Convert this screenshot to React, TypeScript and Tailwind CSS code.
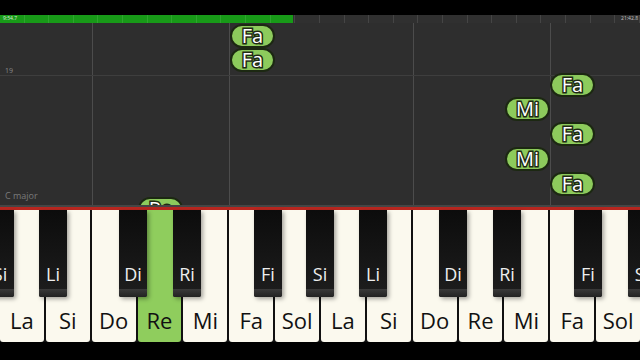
import React from 'react';

// Piano-roll lesson view: note bubbles falling onto a solfege keyboard

type Note = { label: string; left: string; top: string };

const notes: Note[] = [
  { label: 'Fa', left: 'left-[230px]', top: 'top-[1px]' },
  { label: 'Fa', left: 'left-[230px]', top: 'top-[25px]' },
  { label: 'Fa', left: 'left-[550px]', top: 'top-[50px]' },
  { label: 'Mi', left: 'left-[505px]', top: 'top-[74px]' },
  { label: 'Fa', left: 'left-[550px]', top: 'top-[99px]' },
  { label: 'Mi', left: 'left-[505px]', top: 'top-[124px]' },
  { label: 'Fa', left: 'left-[550px]', top: 'top-[149px]' },
  { label: 'Re', left: 'left-[138px]', top: 'top-[174px]' },
];

const whiteKeys = ['La', 'Si', 'Do', 'Re', 'Mi', 'Fa', 'Sol', 'La', 'Si', 'Do', 'Re', 'Mi', 'Fa', 'Sol'];

const blackKeys: { label: string; left: string }[] = [
  { label: 'Si', left: 'left-[-14px]' },
  { label: 'Li', left: 'left-[39px]' },
  { label: 'Di', left: 'left-[119px]' },
  { label: 'Ri', left: 'left-[173px]' },
  { label: 'Fi', left: 'left-[254px]' },
  { label: 'Si', left: 'left-[306px]' },
  { label: 'Li', left: 'left-[359px]' },
  { label: 'Di', left: 'left-[439px]' },
  { label: 'Ri', left: 'left-[493px]' },
  { label: 'Fi', left: 'left-[574px]' },
  { label: 'Si', left: 'left-[628px]' },
];

const font = { fontFamily: '"Open Sans", "Noto Sans", sans-serif' };

const Bubble: React.FC<{ note: Note }> = ({ note }) => (
  <div
    className={`absolute ${note.left} ${note.top} w-[45px] h-[24px] rounded-[12px] bg-[#8dcb5c] border-2 border-[#1c2812] flex items-center justify-center`}
  >
    <span className="text-[20px] leading-none text-white font-normal [paint-order:stroke] [-webkit-text-stroke:3px_#1e2a14]">
      {note.label}
    </span>
  </div>
);

export default function App() {
  return (
    <div className="w-[640px] h-[360px] bg-black flex flex-col overflow-hidden" style={font}>
      <div className="h-[15px]" />

      {/* progress bar */}
      <div className="h-[8px] flex relative">
        <div className="w-[293px] bg-[#189a18]" />
        <div className="flex-1 bg-[#303030]" />
        <div className="absolute inset-0 flex">
          {Array.from({ length: 26 }).map((_, i) => (
            <div key={i} className="flex-1 border-r border-white/10" />
          ))}
        </div>
        <span className="absolute left-[3px] top-[1px] text-[5px] leading-none text-white/80">9:54.7</span>
        <span className="absolute right-[2px] top-[1px] text-[5px] leading-none text-white/70">21:42.8</span>
      </div>

      {/* note canvas */}
      <div className="h-[182px] relative bg-[#2e2e2e] overflow-hidden">
        <div className="absolute left-[92px] top-0 bottom-0 w-px bg-[#4c4c4c]" />
        <div className="absolute left-[229px] top-0 bottom-0 w-px bg-[#4c4c4c]" />
        <div className="absolute left-[413px] top-0 bottom-0 w-px bg-[#4c4c4c]" />
        <div className="absolute left-[550px] top-0 bottom-0 w-px bg-[#4c4c4c]" />
        <div className="absolute left-0 right-0 top-[52px] h-px bg-[#3e3e3e]" />
        <span className="absolute left-[5px] top-[43px] text-[7px] text-[#8a8a8a]">19</span>
        <span className="absolute left-[5px] bottom-[3px] text-[9px] text-[#7a7a7a]">C major</span>
        {notes.map((n, i) => (
          <Bubble key={i} note={n} />
        ))}
      </div>

      <div className="h-[2px] bg-[#454545]" />
      <div className="h-[3px] bg-[#b8261f]" />

      {/* keyboard */}
      <div className="h-[132px] relative flex gap-[2px] bg-[#111]">
        {whiteKeys.map((k, i) => (
          <div
            key={i}
            className={`flex-1 rounded-b-[3px] flex items-end justify-center pb-[11px] ${
              i === 3 ? 'bg-[#8fcd5d]' : 'bg-[#fbf9ee]'
            }`}
          >
            <span className="text-[22px] leading-none text-[#111]">{k}</span>
          </div>
        ))}
        {blackKeys.map((b, i) => (
          <div
            key={i}
            className={`absolute top-0 ${b.left} w-[28px] h-[87px] rounded-b-[2px] bg-gradient-to-b from-[#0c0c0c] to-[#1e1e1e] flex flex-col shadow-[2px_2px_4px_rgba(0,0,0,0.35)]`}
          >
            <div className="flex-1 flex items-end justify-center pb-[6px]">
              <span className="text-[18px] leading-none text-[#eee]">{b.label}</span>
            </div>
            <div className="h-[8px] rounded-b-[2px] bg-gradient-to-b from-[#3a3a3a] to-[#222]" />
          </div>
        ))}
      </div>

      <div className="flex-1 bg-black" />
    </div>
  );
}
